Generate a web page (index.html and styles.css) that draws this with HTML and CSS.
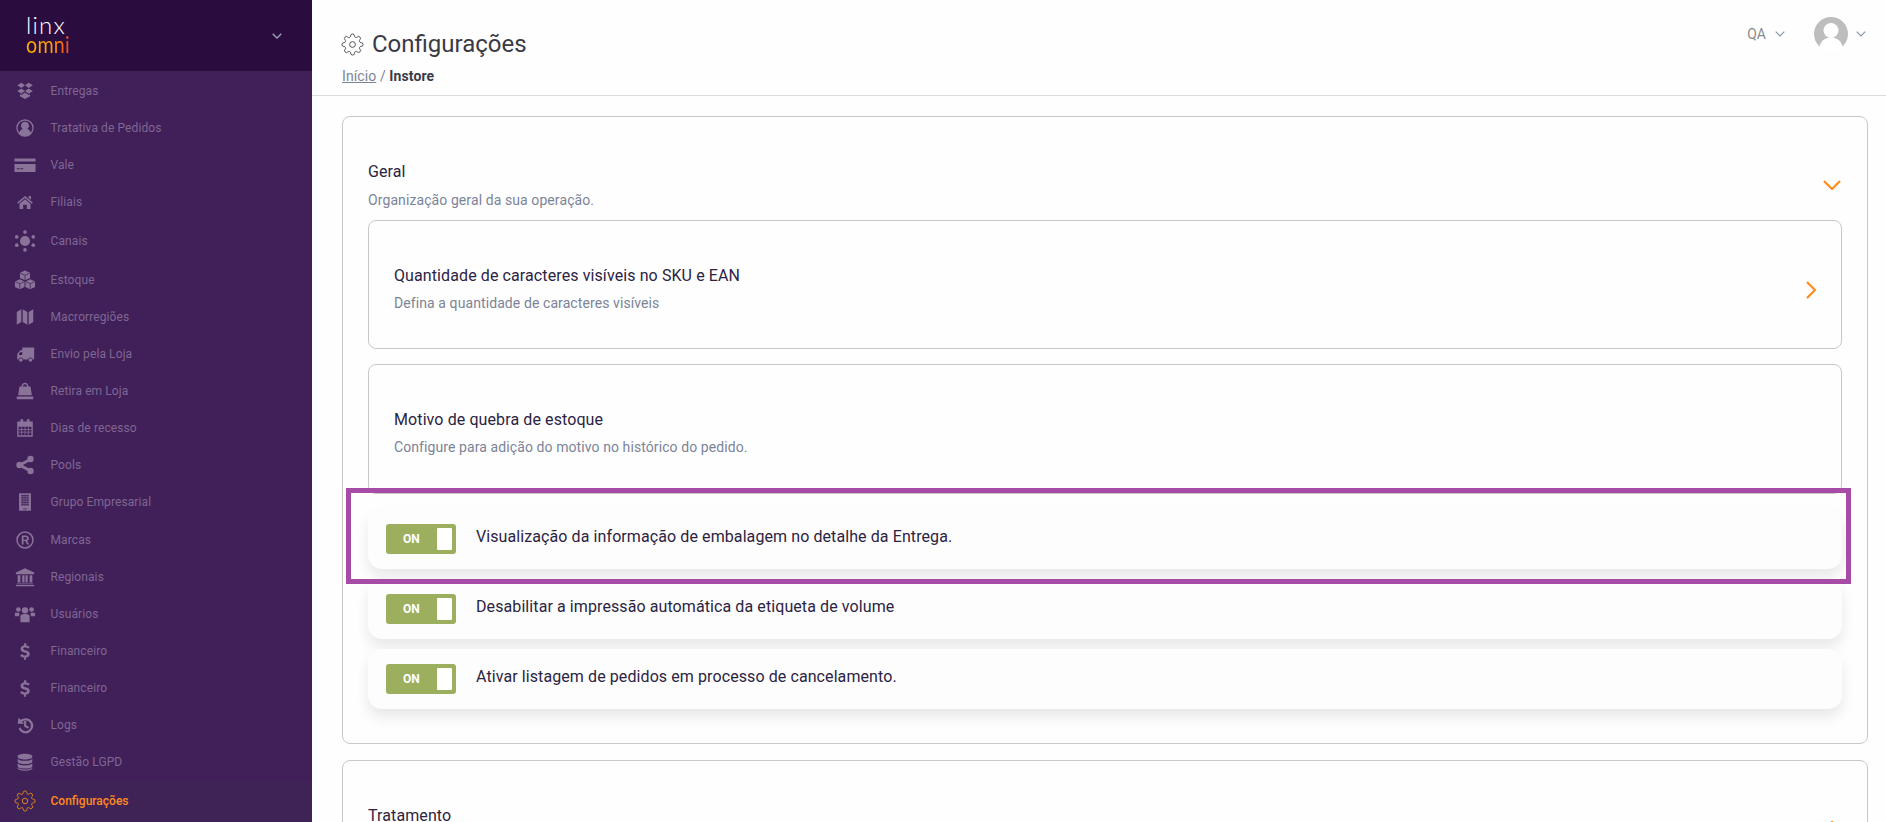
FILE: index.html
```html
<!DOCTYPE html>
<html lang="pt-BR">
<head>
<meta charset="utf-8">
<title>Configurações</title>
<link rel="stylesheet" href="styles.css">
</head>
<body>
<svg class="defs" width="0" height="0"><defs>
<symbol id="gear" viewBox="0 0 24 24"><path d="M12 15a3 3 0 1 0 0-6 3 3 0 0 0 0 6z"/><path d="M19.4 15a1.65 1.65 0 0 0 .33 1.82l.06.06a2 2 0 0 1 0 2.83 2 2 0 0 1-2.83 0l-.06-.06a1.65 1.65 0 0 0-1.82-.33 1.65 1.65 0 0 0-1 1.51V21a2 2 0 0 1-2 2 2 2 0 0 1-2-2v-.09A1.65 1.65 0 0 0 9 19.4a1.65 1.65 0 0 0-1.82.33l-.06.06a2 2 0 0 1-2.83 0 2 2 0 0 1 0-2.83l.06-.06a1.65 1.65 0 0 0 .33-1.82 1.65 1.65 0 0 0-1.51-1H3a2 2 0 0 1-2-2 2 2 0 0 1 2-2h.09A1.65 1.65 0 0 0 4.6 9a1.65 1.65 0 0 0-.33-1.82l-.06-.06a2 2 0 0 1 0-2.83 2 2 0 0 1 2.83 0l.06.06a1.65 1.65 0 0 0 1.82.33H9a1.65 1.65 0 0 0 1-1.51V3a2 2 0 0 1 2-2 2 2 0 0 1 2 2v.09a1.65 1.65 0 0 0 1 1.51 1.65 1.65 0 0 0 1.82-.33l.06-.06a2 2 0 0 1 2.83 0 2 2 0 0 1 0 2.83l-.06.06a1.65 1.65 0 0 0-.33 1.82V9a1.65 1.65 0 0 0 1.51 1H21a2 2 0 0 1 2 2 2 2 0 0 1-2 2h-.09a1.65 1.65 0 0 0-1.51 1z"/></symbol>
<symbol id="dollar" viewBox="0 0 24 24"><path d="M11 3.500h2.400v2.400c1.500.2 2.800.7 3.600 1.300l-1.200 2.300c-1-.7-2.300-1.200-3.700-1.200-1.300 0-2 .5-2 1.200 0 .8.9 1.100 2.600 1.600 2.600.7 4.500 1.600 4.500 4.100 0 2.100-1.600 3.600-4.100 4v2.300H11v-2.300c-1.800-.2-3.300-.9-4.300-1.800l1.400-2.200c1.100 1 2.600 1.600 4 1.600 1.300 0 2.100-.5 2.100-1.400 0-.9-1-1.300-2.900-1.800-2.400-.7-4.100-1.500-4.100-3.900 0-2 1.500-3.500 3.800-3.900z"/></symbol>
</defs></svg>

<div class="app">
  <aside class="sidebar">
    <div class="brand">
      <div class="logo">
        <span class="logo-top">linx</span>
        <span class="logo-bottom">omni</span>
      </div>
      <svg class="brand-chevron" width="10" height="6" viewBox="0 0 10 6"><path d="M.7.7 5 5l4.300-4.300"/></svg>
    </div>
    <nav class="nav">
      <a class="item"><svg class="ic" viewBox="0 0 24 24"><path d="M8 3 12 5.800 8 8.700 3.500 5.800zM16 3 20.500 5.800 16 8.700 12 5.800zM8 9.200 12 12.100 8 15 3.500 12.100zM16 9.200 20.500 12.100 16 15 12 12.100zM8 16.300 12 13.700 16 16.300 17.500 15.300V17.700L12 20.800 6.500 17.700V15.300z"/></svg><span>Entregas</span></a>
      <a class="item"><svg class="ic" viewBox="0 0 24 24"><path fill-rule="evenodd" d="M12 2.500a9.500 9.500 0 1 1 0 19 9.500 9.500 0 0 1 0-19zm0 1.500a8 8 0 0 0-6.200 13c.7-2.200 2.200-3.400 3.700-3.800a4.400 4.400 0 1 1 5 0c1.500.4 3 1.600 3.700 3.800A8 8 0 0 0 12 4z"/></svg><span>Tratativa de Pedidos</span></a>
      <a class="item"><svg class="ic" viewBox="0 0 24 24"><path d="M.5 5h23v3.300H.5zM.5 11h23v8.500H.5zM3 15.500v1h3v-1zm4 0v1h3v-1z" fill-rule="evenodd"/></svg><span>Vale</span></a>
      <a class="item"><svg class="ic" viewBox="0 0 24 24"><path d="M12 5.500 20.500 12.500 19.500 13.800 12 7.600 4.500 13.800 3.500 12.500zM12 9 18 14V19.500H14V15H10V19.500H6V14zM16 5.500H18.500V9.500L16 7.500z"/></svg><span>Filiais</span></a>
      <a class="item tall"><svg class="ic" viewBox="0 0 24 24"><circle cx="12" cy="12" r="5.500"/><circle cx="12" cy="2.300" r="2"/><circle cx="12" cy="21.700" r="2"/><circle cx="3" cy="7.500" r="2"/><circle cx="21" cy="7.500" r="2"/><circle cx="3" cy="16.500" r="2"/><circle cx="21" cy="16.500" r="2"/></svg><span>Canais</span></a>
      <a class="item"><svg class="ic" viewBox="0 0 24 24"><path d="M12 1.500 17.500 4V9.800L12 12.300 6.500 9.800V4zM6.300 11.200 11.500 13.500V19.500L6.300 22 1 19.500V13.500zM17.700 11.200 23 13.500V19.500L17.700 22 12.500 19.500V13.500z"/><path class="ic-line" d="M6.800 4.400 12 6.800 17.200 4.400M12 6.800V12M1.300 13.800 6.300 16 11.200 13.800M6.300 16V21.500M12.800 13.800 17.700 16 22.700 13.800M17.700 16V21.500"/></svg><span>Estoque</span></a>
      <a class="item"><svg class="ic" viewBox="0 0 24 24"><path d="M3 6.500 8 3.500V17.500L3 20.500zM9.500 3.500 14.500 6.500V20.500L9.500 17.500zM16 6.500 21 3.500V17.500L16 20.500z"/></svg><span>Macrorregiões</span></a>
      <a class="item"><svg class="ic" viewBox="0 0 24 24"><path fill-rule="evenodd" d="M9 5h13v13h-1.500a2.700 2.700 0 0 0-5.300 0h-5a2.700 2.700 0 0 0-5.300 0H3.500V12L7 8h2zM5.500 11.500v1.500H9V9.700H7.500zM7.500 16.500a2 2 0 1 1 0 4 2 2 0 0 1 0-4zm10.400 0a2 2 0 1 1 0 4 2 2 0 0 1 0-4z"/></svg><span>Envio pela Loja</span></a>
      <a class="item"><svg class="ic" viewBox="0 0 24 24"><path fill-rule="evenodd" d="M12 3c2.300 0 3.600 1.500 3.800 4H18l1.500 9.500h-15L6 7h2.200C8.400 4.500 9.700 3 12 3zm0 1.500c-1.300 0-2.100.9-2.300 2.500h4.600c-.2-1.600-1-2.500-2.300-2.500zM3 18h18v3H3z"/></svg><span>Retira em Loja</span></a>
      <a class="item"><svg class="ic" viewBox="0 0 24 24"><path fill-rule="evenodd" d="M3.500 5H7V2.500h3V5h4V2.500h3V5h3.500v16.500h-17zM5 10.500v9.500h14v-9.500z"/><path d="M5 13h14v.8H5zM5 16.200h14v.8H5zM8 10.500h.8v9.500H8zM11.600 10.500h.8v9.500h-.8zM15.200 10.500h.8v9.500h-.8z"/></svg><span>Dias de recesso</span></a>
      <a class="item"><svg class="ic" viewBox="0 0 24 24"><circle cx="18" cy="5.500" r="3.500"/><circle cx="18" cy="18.500" r="3.500"/><circle cx="6" cy="12" r="3.500"/><path d="M17 4.500 18.500 7 7 13.500 5.500 10.500zM7 10.500 18.500 17 17 19.500 5.500 13.500z"/></svg><span>Pools</span></a>
      <a class="item"><svg class="ic" viewBox="0 0 24 24"><path d="M5.500 2.500h13v19h-13z"/><path class="ic-line" d="M7.500 5h9M7.500 7.500h9M7.500 10h9M7.500 12.500h9M7.500 15h9M9 4v12M11 4v12M13 4v12M15 4v12M10 19.500h4"/></svg><span>Grupo Empresarial</span></a>
      <a class="item reg"><svg class="ic" viewBox="0 0 24 24"><path fill-rule="evenodd" d="M12 2.500a9.500 9.500 0 1 1 0 19 9.500 9.500 0 0 1 0-19zm0 1.600a7.900 7.900 0 1 0 0 15.800 7.900 7.900 0 0 0 0-15.800zM8.500 7h4.200c2.200 0 3.500 1.200 3.500 3.100 0 1.400-.7 2.400-1.900 2.800l2.200 4.100h-2.200l-2-3.800h-1.900V17H8.500zm1.900 1.600v3h2c1.100 0 1.800-.6 1.800-1.500s-.6-1.500-1.800-1.500z"/></svg><span>Marcas</span></a>
      <a class="item"><svg class="ic" viewBox="0 0 24 24"><path d="M12 2.500 22 7V9H2V7zM4 10h3v8H4zM9 10h2.500v8H9zM12.500 10H15v8h-2.500zM17 10h3v8h-3zM3 19h18v1H3zM2 20.800h20v1.200H2z"/></svg><span>Regionais</span></a>
      <a class="item"><svg class="ic" viewBox="0 0 24 24"><circle cx="12" cy="8" r="3.500"/><circle cx="4.800" cy="7" r="2.500"/><circle cx="19.200" cy="7" r="2.500"/><path d="M7 13.500c1-1 3-1.600 5-1.600s4 .6 5 1.600v7.500H7zM1 10.500h4.500C5.800 11 6 11.500 6.200 12 5.800 12.500 5.500 13 5.500 14.500H1zM23 10.500h-4.500c-.3.500-.5 1-.7 1.500.4.500.7 1 .7 2.500H23z"/></svg><span>Usuários</span></a>
      <a class="item"><svg class="ic"><use href="#dollar"/></svg><span>Financeiro</span></a>
      <a class="item"><svg class="ic"><use href="#dollar"/></svg><span>Financeiro</span></a>
      <a class="item"><svg class="ic" viewBox="0 0 24 24"><path d="M5 4 7.400 6.400A8.300 8.300 0 1 1 5 16l2-1.500a5.800 5.800 0 1 0 2-6.200L11 10.500H4zM11 7.500h2.300V12.300l3.200 2-1.200 1.700L11 13.500z"/></svg><span>Logs</span></a>
      <a class="item"><svg class="ic" viewBox="0 0 24 24"><path d="M12 3c4.400 0 8 1.100 8 2.600v1C20 8.100 16.400 9.300 12 9.300S4 8.100 4 6.600v-1C4 4.100 7.600 3 12 3zM4 8.600c1.500 1.400 4.500 2 8 2s6.500-.6 8-2v3c0 1.500-3.600 2.700-8 2.700s-8-1.200-8-2.700zM4 13.600c1.500 1.400 4.500 2 8 2s6.500-.6 8-2v2.900c0 1.500-3.600 2.700-8 2.700s-8-1.200-8-2.700zM4 18.200c1.500 1.300 4.500 2 8 2s6.500-.7 8-2v.5c0 1.500-3.600 2.800-8 2.800s-8-1.300-8-2.800z"/></svg><span>Gestão LGPD</span></a>
      <a class="item tall active"><svg class="ic-gear"><use href="#gear"/></svg><span>Configurações</span></a>
    </nav>
  </aside>

  <main class="main">
    <header class="topbar">
      <div class="heading">
        <h1 class="title"><svg class="title-gear"><use href="#gear"/></svg>Configurações</h1>
        <p class="crumbs"><a class="crumb-link">Início</a> / <strong>Instore</strong></p>
      </div>
      <div class="top-actions">
        <span class="env">QA</span>
        <svg class="top-chevron" width="10" height="6" viewBox="0 0 10 6"><path d="M.7.7 5 5l4.300-4.300"/></svg>
        <svg class="avatar" width="34" height="34" viewBox="0 0 34 34"><circle cx="17" cy="17" r="17" fill="#bdbdbd"/><circle cx="17" cy="13.500" r="7.500" fill="#fff"/><path d="M5 32c1-8 6-11.500 12-11.500S28 24 29 32a17 17 0 0 1-24 0z" fill="#fff"/></svg>
        <svg class="top-chevron" width="10" height="6" viewBox="0 0 10 6"><path d="M.7.7 5 5l4.300-4.300"/></svg>
      </div>
    </header>

    <section class="panel">
      <div class="panel-head">
        <div>
          <h2 class="panel-title">Geral</h2>
          <p class="panel-sub">Organização geral da sua operação.</p>
        </div>
        <svg class="chev-down" width="18" height="10" viewBox="0 0 18 10"><path d="M1 1l8 8 8-8"/></svg>
      </div>
      <div class="option">
        <div>
          <h3 class="panel-title">Quantidade de caracteres visíveis no SKU e EAN</h3>
          <p class="panel-sub option-sub">Defina a quantidade de caracteres visíveis</p>
        </div>
        <svg class="chev-right" width="10" height="18" viewBox="0 0 10 18"><path d="M1 1l8 8-8 8"/></svg>
      </div>
      <div class="option option-last">
        <div>
          <h3 class="panel-title">Motivo de quebra de estoque</h3>
          <p class="panel-sub option-sub">Configure para adição do motivo no histórico do pedido.</p>
        </div>
      </div>
      <div class="rows">
        <div class="row">
          <span class="toggle"><b>ON</b><i class="knob"></i></span>
          <span class="row-text">Visualização da informação de embalagem no detalhe da Entrega.</span>
        </div>
        <div class="row">
          <span class="toggle"><b>ON</b><i class="knob"></i></span>
          <span class="row-text">Desabilitar a impressão automática da etiqueta de volume</span>
        </div>
        <div class="row">
          <span class="toggle"><b>ON</b><i class="knob"></i></span>
          <span class="row-text">Ativar listagem de pedidos em processo de cancelamento.</span>
        </div>
      </div>
    </section>

    <section class="panel panel-next">
      <div class="panel-head head-collapsed">
        <h2 class="panel-title">Tratamento</h2>
        <svg class="chev-down chev-up" width="18" height="10" viewBox="0 0 18 10"><path d="M1 9l8-8 8 8"/></svg>
      </div>
    </section>
  </main>
</div>
<div class="highlight"></div>
</body>
</html>
```

FILE: styles.css
```css
* { box-sizing: border-box; }
html, body { margin: 0; height: 100%; overflow: hidden; }
body { font-family: Roboto, "Liberation Sans", sans-serif; background: #fefefe; color: #2c2342; }
h1, h2, h3, p { margin: 0; font-weight: 400; }
.defs { position: absolute; }

.app { display: flex; height: 822px; overflow: hidden; }

.sidebar { width: 312px; flex: none; background: #411f59; display: flex; flex-direction: column; overflow: hidden; }
.brand { height: 71px; flex: none; background: #2a0c3f; display: flex; align-items: center; justify-content: space-between; padding: 0 30px 0 26px; }
.logo { display: flex; flex-direction: column; font-family: Lato, "Open Sans", sans-serif; font-size: 24px; line-height: 19px; margin-top: -4px; }
.logo-top { color: #fff; font-weight: 300; letter-spacing: 1.2px; }
.logo-bottom { width: max-content; font-weight: 400; letter-spacing: .3px; transform: scaleX(.82); transform-origin: left center; background: linear-gradient(90deg, #ffb000 0%, #ff9c0a 60%, #f0421c 100%); -webkit-background-clip: text; background-clip: text; color: transparent; }
.brand-chevron path { fill: none; stroke: #9aa6b4; stroke-width: 1.3; }

.nav { display: flex; flex-direction: column; padding-top: 1.5px; }
.item { height: 37px; flex: none; display: flex; align-items: center; gap: 14.5px; padding-left: 14px; font-size: 12px; letter-spacing: .1px; color: #7f6793; }
.tall { height: 41px; }
.reg { height: 38px; }
.ic { width: 22px; height: 22px; flex: none; fill: #8a7399; }
.ic-line { fill: none; stroke: #411f59; stroke-width: .8; }
.active { margin-left: 15px; padding-left: 0; background: #3f2256; color: #ff8a1e; font-weight: 500; letter-spacing: 0; }
.ic-gear { width: 22px; height: 22px; flex: none; margin-left: -1px; fill: none; stroke: #e88a1a; stroke-width: 1; }

.main { flex: 1; min-width: 0; overflow: hidden; }
.topbar { height: 96px; border-bottom: 1px solid #dcdcdc; display: flex; justify-content: space-between; padding: 29px 20px 0 30px; }
.title { display: flex; align-items: center; gap: 8px; font-size: 24px; line-height: 30px; color: #3a3a46; }
.title-gear { width: 23px; height: 23px; margin-left: -1px; fill: none; stroke: #4a4a54; stroke-width: 1; }
.crumbs { margin-top: 9px; font-size: 14px; line-height: 17px; letter-spacing: .1px; color: #7b8497; }
.crumb-link { text-decoration: underline; }
.crumbs strong { font-weight: 700; color: #3a3a46; }
.top-actions { display: flex; align-items: center; height: 34px; margin-top: -12px; font-size: 14px; color: #8b8b8b; }
.env { margin-right: 9px; }
.top-chevron path { fill: none; stroke: #8a97a5; stroke-width: 1.2; }
.avatar { margin: 0 8px 0 29px; }

.panel { margin: 20px 18px 0 30px; height: 628px; border: 1px solid #c8c8c8; border-radius: 8px; padding: 41px 25px 34px; }
.panel-next { margin-top: 16px; height: 200px; }
.panel-head { display: flex; align-items: center; justify-content: space-between; height: 62px; padding-bottom: 9px; }
.head-collapsed { align-items: flex-start; padding: 2px 0 0; }
.panel-title { font-size: 16px; line-height: 24px; letter-spacing: .1px; color: #2c2342; }
.panel-sub { margin-top: 6px; font-size: 14px; line-height: 20px; letter-spacing: .09px; color: #7b8497; }
.option-sub { margin-top: 5px; }
.chev-down { margin-right: 1px; }
.chev-down path, .chev-right path { fill: none; stroke: #ff8c1a; stroke-width: 2.2; }
.chev-up { margin-top: 17px; }
.option { height: 129px; border: 1px solid #c8c8c8; border-radius: 8px; display: flex; justify-content: space-between; padding: 43px 25px 0; margin-bottom: 15px; }
.chev-right { margin-top: 17px; }
.option-last { height: 130px; }

.rows { display: flex; flex-direction: column; gap: 10px; }
.row { height: 60px; background: #fdfdfd; border-radius: 14px; box-shadow: 0 8px 14px rgba(0, 0, 0, .09); display: flex; align-items: center; gap: 20px; padding-left: 18px; }
.row-text { font-size: 16px; padding-bottom: 6px; letter-spacing: .09px; color: #2c2342; }
.toggle { width: 70px; height: 30px; background: #9caf5f; border-radius: 3px; display: flex; align-items: center; justify-content: space-between; padding: 0 4px 0 17px; color: #fff; font-size: 12px; }
.toggle b { font-weight: 700; }
.knob { width: 15px; height: 22px; background: #fff; border-radius: 1px; }

.highlight { position: absolute; left: 346px; top: 488px; width: 1505px; height: 96px; border: 5px solid #a64ca6; pointer-events: none; }
```
